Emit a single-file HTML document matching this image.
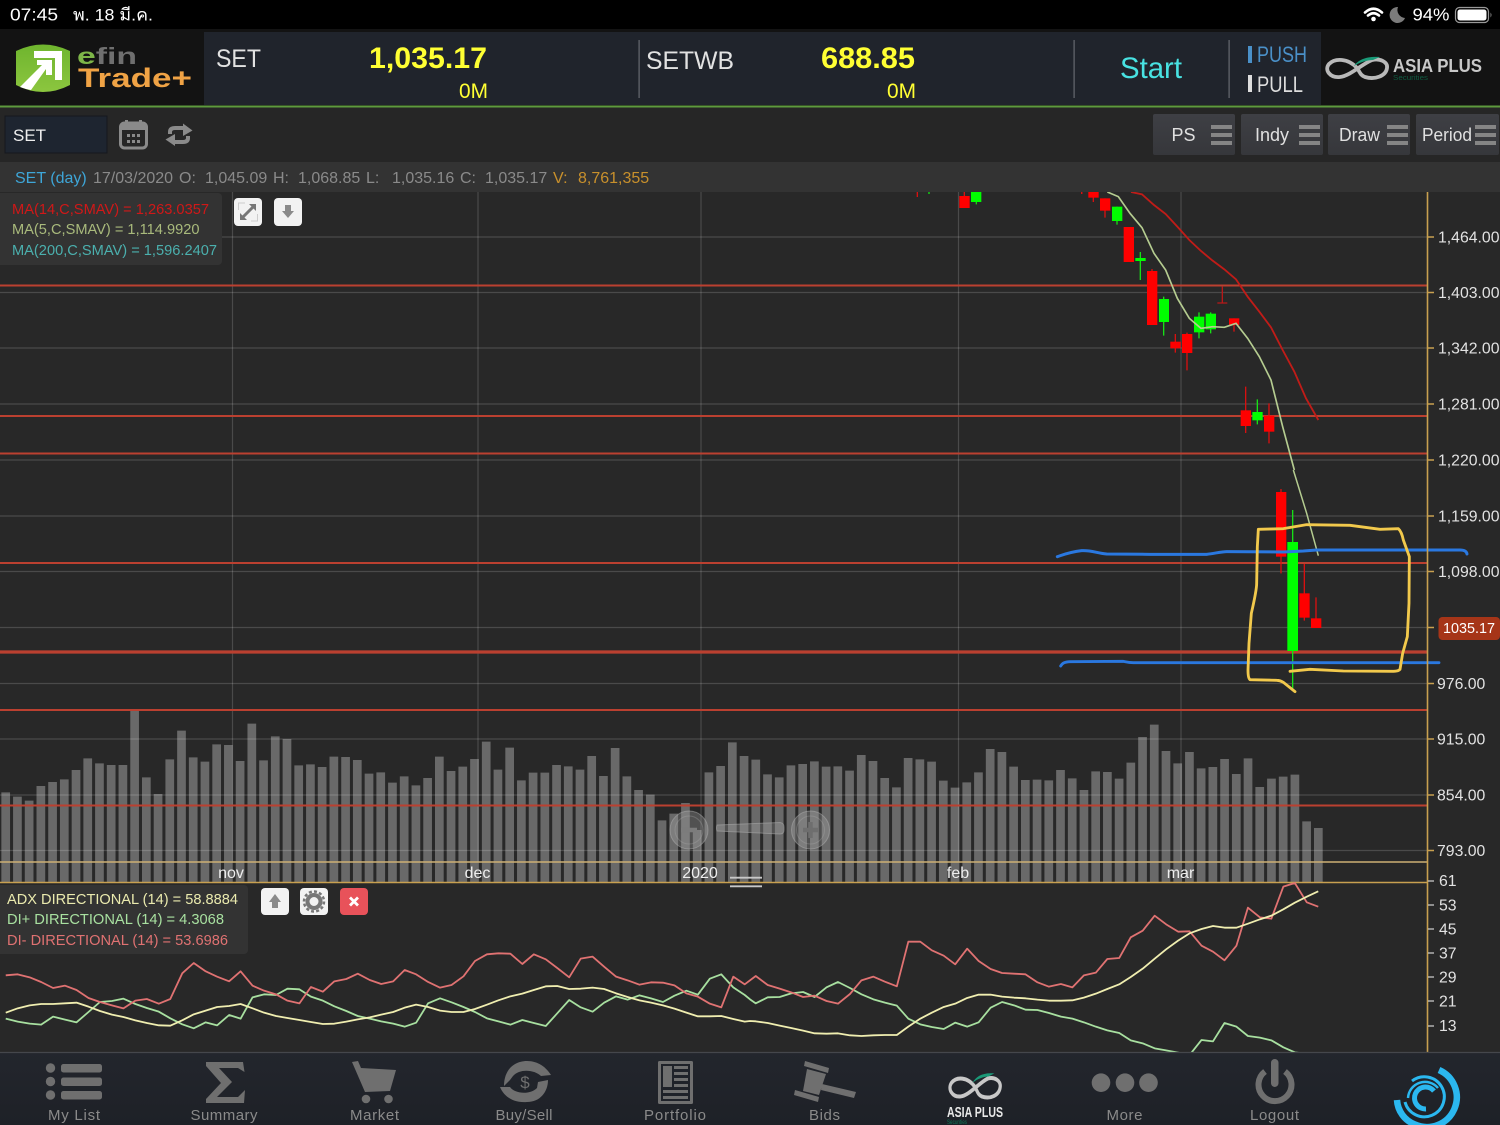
<!DOCTYPE html>
<html lang="th"><head><meta charset="utf-8"><title>efin Trade+</title>
<style>html,body{margin:0;padding:0;background:#282828;width:1500px;height:1125px;overflow:hidden}svg{display:block;filter:blur(.35px)}text{font-family:"Liberation Sans","Noto Sans CJK JP",sans-serif}</style></head>
<body>
<svg width="1500" height="1125" viewBox="0 0 1500 1125" xmlns="http://www.w3.org/2000/svg">
<defs>
<clipPath id="c1"><rect x="0" y="192" width="1427" height="690"/></clipPath>
<clipPath id="c2"><rect x="0" y="882" width="1427" height="170"/></clipPath>
<clipPath id="c3"><rect x="1380" y="1053" width="120" height="72"/></clipPath>
<linearGradient id="sh" x1="0" y1="0" x2="0" y2="1"><stop offset="0" stop-color="#6fb52e"/><stop offset="1" stop-color="#8cc63f"/></linearGradient>
<linearGradient id="btn" x1="0" y1="0" x2="0" y2="1"><stop offset="0" stop-color="#3e3f44"/><stop offset="1" stop-color="#36373b"/></linearGradient>
<linearGradient id="nav" x1="0" y1="0" x2="0" y2="1"><stop offset="0" stop-color="#23262d"/><stop offset="1" stop-color="#1e2127"/></linearGradient>
</defs>
<rect width="1500" height="1125" fill="#282828"/>
<!-- status bar -->
<rect width="1500" height="29" fill="#000"/>
<text x="10" y="20.5" font-size="17.5" fill="#fff" textLength="48" lengthAdjust="spacingAndGlyphs">07:45</text>
<text x="73" y="20.5" font-size="17" fill="#fff" textLength="80" lengthAdjust="spacingAndGlyphs">พ. 18 มี.ค.</text>
<g fill="none" stroke="#fff" stroke-width="2.6" stroke-linecap="round"><path d="M1365 12.5Q1373.500 5 1382 12.500"/><path d="M1368 15.500Q1373.500 11 1379 15.500"/></g>
<circle cx="1373.500" cy="19" r="2.300" fill="#fff"/>
<path d="M1398 7A8 8 0 1 0 1405 18A8 8 0 0 1 1398 7Z" fill="#7b7b7b"/>
<text x="1412.500" y="20.500" font-size="17.500" fill="#fff" textLength="37" lengthAdjust="spacingAndGlyphs">94%</text>
<rect x="1455.500" y="7.500" width="33" height="15" rx="4" fill="none" stroke="#999" stroke-width="1.200"/>
<rect x="1457.500" y="9.500" width="29" height="11" rx="2.500" fill="#fff"/>
<path d="M1490.500 12.500Q1492.500 15 1490.500 17.500Z" fill="#888"/>
<!-- header -->
<rect y="29" width="1500" height="77" fill="#131313"/>
<rect x="204" y="32" width="1117" height="73" fill="#20242c"/>
<rect y="105.500" width="1500" height="2" fill="#5d9a3d"/>
<path d="M16 51Q43 38 70 51V85Q43 99 16 85Z" fill="url(#sh)"/>
<path d="M34 51H62V80H55V58H34Z" fill="#fff"/>
<path d="M37 60H52V75H46V69L31 90Q25 89 20 87L42 65H37Z" fill="#fff"/>
<text x="77" y="64" font-size="23" font-weight="bold" textLength="60" lengthAdjust="spacingAndGlyphs"><tspan fill="#7db548">e</tspan><tspan fill="#6f6f6f">fin</tspan></text>
<text x="78" y="87" font-size="27" font-weight="bold" fill="#f0a345" textLength="114" lengthAdjust="spacingAndGlyphs">Trade+</text>
<text x="216" y="67" font-size="25" fill="#e2e2e2" textLength="45" lengthAdjust="spacingAndGlyphs">SET</text>
<text x="369" y="68" font-size="30" font-weight="bold" fill="#ffff33" textLength="118" lengthAdjust="spacingAndGlyphs">1,035.17</text>
<text x="459" y="98" font-size="21" fill="#ffff33" textLength="29" lengthAdjust="spacingAndGlyphs">0M</text>
<text x="646" y="69" font-size="25" fill="#e2e2e2" textLength="88" lengthAdjust="spacingAndGlyphs">SETWB</text>
<text x="821" y="68" font-size="30" font-weight="bold" fill="#ffff33" textLength="94" lengthAdjust="spacingAndGlyphs">688.85</text>
<text x="887" y="98" font-size="21" fill="#ffff33" textLength="29" lengthAdjust="spacingAndGlyphs">0M</text>
<g fill="#666a70"><rect x="638.500" y="40" width="1.200" height="58"/><rect x="1073.500" y="40" width="1.200" height="58"/><rect x="1228.500" y="40" width="1.200" height="58"/></g>
<text x="1120" y="78" font-size="29.500" fill="#48e2e2" textLength="62" lengthAdjust="spacingAndGlyphs">Start</text>
<rect x="1248" y="46" width="4" height="17" fill="#4a90c8"/>
<text x="1257" y="62" font-size="22" fill="#4a90c8" textLength="50" lengthAdjust="spacingAndGlyphs">PUSH</text>
<rect x="1248" y="75" width="4" height="17" fill="#ddd"/>
<text x="1257" y="92" font-size="22" fill="#ddd" textLength="46" lengthAdjust="spacingAndGlyphs">PULL</text>
<path d="M1357 68C1348 58 1335 58 1329 64C1324 70 1330 78 1340 77C1350 76 1362 64 1372 60C1380 58 1388 62 1387 68C1386 76 1375 80 1365 77C1360 75 1360 72 1357 68" fill="none" stroke="#b9b9b9" stroke-width="3.800"/>
<path d="M1354 66C1358 60 1366 56 1380 57L1373 60C1368 60 1360 62 1354 66Z" fill="#1a9a78"/>
<text x="1393" y="72" font-size="18" font-weight="bold" fill="#c9c9c9" textLength="89" lengthAdjust="spacingAndGlyphs">ASIA PLUS</text>
<text x="1393" y="80" font-size="7" fill="#0f5a40" textLength="35" lengthAdjust="spacingAndGlyphs">Securities</text>
<!-- toolbar -->
<rect y="107.500" width="1500" height="55" fill="#262626"/>
<rect x="5" y="116" width="102" height="37" fill="#1e2530" stroke="#15181d"/>
<text x="13" y="141" font-size="17" fill="#eee">SET</text>
<rect x="120.500" y="123" width="26" height="25" rx="4" fill="none" stroke="#8a8a8a" stroke-width="3"/>
<rect x="120.500" y="123" width="26" height="7" fill="#8a8a8a"/>
<rect x="125" y="120" width="3" height="6" fill="#8a8a8a"/><rect x="139" y="120" width="3" height="6" fill="#8a8a8a"/>
<g fill="#8a8a8a"><rect x="127" y="134" width="3" height="3"/><rect x="132" y="134" width="3" height="3"/><rect x="137" y="134" width="3" height="3"/><rect x="127" y="140" width="3" height="3"/><rect x="132" y="140" width="3" height="3"/><rect x="137" y="140" width="3" height="3"/></g>
<g fill="none" stroke="#8a8a8a" stroke-width="4"><path d="M170 134V132Q170 128 175 128H185"/><path d="M188 136V138Q188 142 183 142H173"/></g>
<path d="M183 123.500L192.500 130.500L183 136Z" fill="#8a8a8a"/><path d="M175 134L165.500 139.500L175 146Z" fill="#8a8a8a"/>
<g fill="url(#btn)"><rect x="1153" y="114" width="82" height="41" rx="2"/><rect x="1241" y="114" width="82" height="41" rx="2"/><rect x="1328" y="114" width="82" height="41" rx="2"/><rect x="1416" y="114" width="83" height="41" rx="2"/></g>
<g fill="#858585"><path d="M1211 125h21v4h-21zM1211 133h21v4h-21zM1211 141h21v4h-21z"/><path d="M1299 125h21v4h-21zM1299 133h21v4h-21zM1299 141h21v4h-21z"/><path d="M1387 125h21v4h-21zM1387 133h21v4h-21zM1387 141h21v4h-21z"/><path d="M1475 125h21v4h-21zM1475 133h21v4h-21zM1475 141h21v4h-21z"/></g>
<g font-size="18" fill="#e0e0e0"><text x="1171.500" y="141">PS</text><text x="1255" y="141">Indy</text><text x="1339" y="141" textLength="41" lengthAdjust="spacingAndGlyphs">Draw</text><text x="1422" y="141" textLength="50" lengthAdjust="spacingAndGlyphs">Period</text></g>
<!-- info bar -->
<rect y="162" width="1500" height="30" fill="#333"/>
<text x="15" y="183" font-size="16" fill="#3ea6d8">SET (day)</text>
<g font-size="16" fill="#8a8a8a"><text x="93" y="183">17/03/2020</text><text x="179" y="183">O:</text><text x="205" y="183">1,045.09</text><text x="273" y="183">H:</text><text x="298" y="183">1,068.85</text><text x="366" y="183">L:</text><text x="392" y="183">1,035.16</text><text x="460" y="183">C:</text><text x="485" y="183">1,035.17</text></g>
<text x="553" y="183" font-size="16" fill="#c8902c">V:</text><text x="578" y="183" font-size="16" fill="#c8902c">8,761,355</text>
<!-- volume bars -->
<g transform="translate(5.700,700) scale(11.72,0.33333)"><path vector-effect="non-scaling-stroke" fill="none" stroke="#696969" stroke-width="8.700" d="M0 546V277M1 546V290M2 546V302M3 546V258M4 546V246M5 546V238M6 546V210M7 546V175M8 546V190M9 546V195M10 546V195M11 546V30M12 546V232M13 546V282M14 546V178M15 546V92M16 546V172M17 546V185M18 546V133M19 546V135M20 546V183M21 546V71M22 546V181M23 546V109M24 546V117M25 546V196M26 546V193M27 546V201M28 546V170M29 546V171M30 546V180M31 546V221M32 546V217M33 546V248M34 546V229M35 546V256M36 546V234M37 546V170M38 546V213M39 546V200M40 546V177M41 546V125M42 546V209M43 546V143M44 546V241M45 546V218M46 546V218M47 546V195M48 546V199M49 546V209M50 546V168M51 546V228M52 546V144M53 546V229M54 546V270M55 546V284M56 546V361M57 546V341M58 546V309M59 546V390M60 546V217M61 546V198M62 546V127M63 546V168M64 546V179M65 546V223M66 546V232M67 546V196M68 546V192M69 546V184M70 546V200M71 546V199M72 546V212M73 546V165M74 546V183M75 546V234M76 546V262M77 546V174M78 546V178M79 546V185M80 546V242M81 546V263M82 546V247M83 546V217M84 546V147M85 546V156M86 546V200M87 546V240M88 546V239M89 546V241M90 546V210M91 546V235M92 546V270M93 546V214M94 546V216M95 546V236M96 546V188M97 546V111M98 546V74M99 546V153M100 546V190M101 546V156M102 546V205M103 546V201M104 546V177M105 546V222M106 546V175M107 546V261M108 546V236M109 546V230M110 546V224M111 546V364M112 546V384"/></g>
<!-- grid -->
<g stroke="#fff" stroke-opacity=".16" stroke-width="1.200" fill="none"><path d="M0 237H1427M0 292.500H1427M0 348H1427M0 404H1427M0 460H1427M0 516H1427M0 571.500H1427M0 627.500H1427M0 683.500H1427M0 739H1427M0 795H1427M0 850.500H1427"/><path d="M232.500 192V862M478 192V862M701 192V862M958.500 192V862M1181 192V862"/></g>
<!-- horizontal red levels -->
<g stroke="#bb4030" fill="none"><path stroke-width="2" d="M0 285.500H1427M0 416H1427M0 453.500H1427M0 563H1427M0 710H1427M0 805.500H1427"/><path stroke-width="3.200" d="M0 652H1427"/></g>
<path d="M0 862H1427" stroke="#cdb074" stroke-width="1.600"/>
<path d="M0 882.500H1427" stroke="#c8a050" stroke-width="1.400"/>
<!-- candles -->
<g clip-path="url(#c1)"><g transform="translate(900,186) scale(.33333)">
<path d="M52 18V33M193 18V30M545 18V24" stroke="#d81010" stroke-width="4"/><path d="M87 18V24M229 40V55" stroke="#10e010" stroke-width="4"/>
<rect x="178" y="30" width="31" height="36" fill="#f00"/><rect x="213" y="10" width="31" height="38" fill="#0f0"/>
</g>
<g transform="translate(1050,190) scale(.33333)">
<g stroke="#d81010" stroke-width="4" fill="none"><path d="M95 0V12M130 0V36M165 25V83M306 237V405M376 432V488M411 428V541M552 385V425M587 590V729M657 640V760"/><path d="M517 290V338M502 339H532" stroke="#b81818"/></g>
<g stroke="#16e016" stroke-width="4" fill="none"><path d="M201 50V104M271 186V270M341 320V437M447 367V445M482 367V430M622 628V703"/></g>
<g fill="#f00"><rect x="115" y="0" width="31" height="23"/><rect x="150" y="25" width="31" height="37"/><rect x="221" y="111" width="31" height="105"/><rect x="291" y="243" width="31" height="162"/><rect x="361" y="455" width="31" height="20"/><rect x="396" y="432" width="31" height="57"/><rect x="537" y="385" width="31" height="20"/><rect x="572" y="661" width="31" height="47"/><rect x="642" y="677" width="31" height="48"/></g>
<g fill="#0f0"><rect x="186" y="50" width="31" height="43"/><rect x="256" y="204" width="31" height="9"/><rect x="327" y="327" width="30" height="69"/><rect x="432" y="380" width="31" height="47"/><rect x="467" y="371" width="31" height="47"/><rect x="607" y="666" width="31" height="25"/></g>
<polyline fill="none" stroke="#c01c18" stroke-width="5.500" points="243,6 276,13 312,45 347,72 382,110 418,150 453,183 488,212 523,238 558,268 593,320 628,365 663,412 698,480 733,545 768,625 805,690"/>
<polyline fill="none" stroke="#b5cc90" stroke-width="5" points="172,6 205,20 240,70 276,113 312,190 347,240 382,325 418,385 453,415 488,410 523,412 558,400 593,445 628,500 663,570 698,710 733,840"/>
</g>
<g transform="translate(1050,470) scale(.33333)">
<path d="M693 57V310M763 282V452M798 382V474" stroke="#d81010" stroke-width="4" fill="none"/>
<path d="M728 120V660" stroke="#16e016" stroke-width="4" fill="none"/>
<rect x="678" y="66" width="31" height="194" fill="#f00"/><rect x="712" y="216" width="32" height="327" fill="#0f0"/>
<rect x="748" y="370" width="31" height="73" fill="#f00"/><rect x="783" y="445" width="31" height="29" fill="#f00"/>
<polyline fill="none" stroke="#b5cc90" stroke-width="4.500" points="730,0 770,130 805,257"/>
</g></g>
<!-- hand-drawn -->
<g transform="translate(1050,470) scale(.33333)" fill="none" stroke-linecap="round" stroke-linejoin="round">
<path stroke="#2a78e0" stroke-width="9" d="M22 260C40 254 60 246 95 242C125 240 140 250 170 252L300 253L470 253C495 250 515 245 530 245L700 246L760 243L800 240L1230 240C1245 240 1250 245 1251 252"/>
<path stroke="#2a78e0" stroke-width="8.500" d="M32 588C38 578 45 576 60 575L220 574C230 576 235 578 250 578L1167 578"/>
<path stroke="#f2c94c" stroke-width="8.500" d="M735 665L700 637Q690 631 680 631L600 629Q594 625 594 600L597 520L604 430Q620 360 620 340L622 230L625 178L700 176L770 164L900 166L990 178L1045 176Q1055 185 1060 210L1078 260L1077 400L1072 500L1058 550L1050 598Q1045 604 1030 604L880 603L780 598L720 604"/>
</g>
<!-- axis -->
<path d="M1427.500 192V1052" stroke="#c8a050" stroke-width="1.600"/>
<g stroke="#c8a050" stroke-width="1.600"><path d="M1427 237H1434M1427 292.500H1434M1427 348H1434M1427 404H1434M1427 460H1434M1427 516H1434M1427 571.500H1434M1427 627.500H1434M1427 683.500H1434M1427 739H1434M1427 795H1434M1427 850.500H1434"/></g>
<path d="M1428 881H1434M1428 905H1434M1428 929H1434M1428 953H1434M1428 977H1434M1428 1001H1434M1428 1026H1434" stroke="#ccc" stroke-width="1.200"/>
<g font-size="15.800" fill="#e2e2e2"><text x="1438" y="242.500">1,464.00</text><text x="1438" y="298">1,403.00</text><text x="1438" y="353.500">1,342.00</text><text x="1438" y="409.500">1,281.00</text><text x="1438" y="465.500">1,220.00</text><text x="1438" y="521.500">1,159.00</text><text x="1438" y="577">1,098.00</text><text x="1437" y="689">976.00</text><text x="1437" y="744.500">915.00</text><text x="1437" y="800.500">854.00</text><text x="1437" y="856">793.00</text>
<text x="1439" y="886">61</text><text x="1439" y="910.500">53</text><text x="1439" y="934.500">45</text><text x="1439" y="958.500">37</text><text x="1439" y="982.500">29</text><text x="1439" y="1006.500">21</text><text x="1439" y="1031">13</text></g>
<rect x="1438.500" y="617" width="61.500" height="23" rx="4" fill="#a63518"/>
<text x="1443" y="633" font-size="14.500" fill="#fff" textLength="52" lengthAdjust="spacingAndGlyphs">1035.17</text>
<!-- month labels -->
<g font-size="16" fill="#eee" text-anchor="middle"><text x="231" y="878">nov</text><text x="477.500" y="878">dec</text><text x="700" y="878">2020</text><text x="958" y="878">feb</text><text x="1180.500" y="878">mar</text></g>
<!-- zoom controls -->
<g fill="#a8a8a8" fill-opacity=".32" stroke="#b0b0b0" stroke-opacity=".5"><circle cx="689" cy="830" r="19"/><circle cx="810.500" cy="830" r="19"/><path d="M717 825L780 822.500Q784 823 784 827V830Q784 834 780 834L717 831Q716 828 717 825Z"/></g>
<circle cx="689" cy="830" r="14" fill="none" stroke="#b0b0b0" stroke-opacity=".3"/><circle cx="810.500" cy="830" r="14" fill="none" stroke="#b0b0b0" stroke-opacity=".3"/>
<path d="M681 830H697" stroke="#7c7c7c" stroke-width="4.500"/><path d="M803 830H818M810.500 822V838" stroke="#6e6e6e" stroke-width="4.500"/>
<path d="M730 877.700H762M730 886.300H762" stroke="#c8c8c8" stroke-width="1.800"/>
<!-- legend main -->
<rect x="-6" y="193" width="228" height="72" rx="4" fill="#333"/>
<g font-size="14.500"><text x="12" y="214" fill="#d01818" textLength="197" lengthAdjust="spacingAndGlyphs">MA(14,C,SMAV) = 1,263.0357</text><text x="12" y="234" fill="#a9ba7c" textLength="187.500" lengthAdjust="spacingAndGlyphs">MA(5,C,SMAV) = 1,114.9920</text><text x="12" y="255" fill="#4bb0ae" textLength="205" lengthAdjust="spacingAndGlyphs">MA(200,C,SMAV) = 1,596.2407</text></g>
<rect x="234" y="198" width="28" height="28" rx="4" fill="#f2f2f2"/><rect x="274" y="198" width="28" height="28" rx="4" fill="#f2f2f2"/>
<path d="M241 219L255 205" stroke="#777" stroke-width="3"/><path d="M240 213V220H247ZM256 211V204H249Z" fill="#777"/><path d="M238.500 210V203H245M257.500 214V221H251" fill="none" stroke="#ccc"/>
<path d="M285 205H291V211H294L288 218L282 211H285Z" fill="#8a8a8a"/>
<!-- ADX panel -->
<g clip-path="url(#c2)"><g transform="translate(0,880) scale(.47832,.33333)" fill="none" stroke-width="1.800" stroke-linejoin="round">
<polyline vector-effect="non-scaling-stroke" stroke="#a8e0a0" points="12,416 37,425 62,431 86,434 111,410 136,419 160,427 185,396 209,366 234,363 258,356 283,372 307,384 332,395 356,415 381,433 405,445 430,427 454,436 479,405 503,416 528,352 552,343 577,345 601,326 626,328 650,350 675,362 699,379 724,393 748,408 773,416 797,424 822,431 846,440 870,428 895,370 920,355 944,367 969,381 993,396 1018,415 1042,424 1067,434 1092,420 1116,429 1141,438 1165,400 1190,360 1214,382 1239,395 1263,368 1288,349 1312,359 1337,346 1361,355 1386,366 1410,347 1435,332 1459,344 1484,296 1508,283 1533,322 1557,345 1568,358 1580,370 1605,352 1630,351 1654,340 1679,336 1703,351 1728,322 1752,306 1777,324 1801,343 1826,358 1850,368 1875,377 1899,416 1924,433 1948,441 1973,447 1997,428 2022,440 2046,427 2071,383 2095,366 2120,376 2144,389 2169,390 2193,399 2218,410 2242,416 2266,427 2291,440 2315,451 2340,459 2364,481 2389,490 2414,505 2438,511 2463,518 2487,525 2512,480 2536,484 2560,429 2585,440 2609,468 2634,473 2658,481 2683,502 2707,517 2732,522"/>
<polyline vector-effect="non-scaling-stroke" stroke="#e07272" points="12,286 37,283 62,292 86,306 111,324 136,317 160,330 185,354 209,366 234,376 258,385 283,362 307,357 332,371 356,357 381,280 405,249 430,274 454,290 479,304 503,274 528,317 552,332 577,343 601,362 626,370 650,321 675,335 699,304 724,297 748,281 773,300 797,312 822,304 846,270 870,283 895,306 920,323 944,315 969,289 993,243 1018,223 1042,220 1067,221 1092,252 1116,223 1141,238 1165,264 1190,292 1214,236 1239,230 1263,260 1288,290 1312,301 1337,314 1361,307 1386,308 1410,316 1435,340 1459,350 1484,371 1508,382 1533,290 1557,313 1580,288 1605,315 1630,326 1654,337 1679,351 1703,347 1728,363 1752,371 1777,342 1801,301 1826,290 1850,305 1875,319 1899,185 1924,185 1948,211 1973,227 1997,253 2022,206 2046,243 2071,267 2095,279 2120,281 2144,283 2169,307 2193,320 2218,312 2242,322 2266,286 2291,278 2315,237 2340,234 2364,172 2389,152 2414,107 2438,133 2463,155 2487,154 2512,197 2536,215 2560,241 2585,197 2609,83 2634,112 2658,116 2683,20 2707,9 2732,67 2756,80"/>
<polyline vector-effect="non-scaling-stroke" stroke="#f0eeb0" points="12,398 37,385 62,376 86,372 111,372 136,370 160,368 185,380 209,393 234,404 258,411 283,421 307,429 332,436 356,437 381,421 405,403 430,392 454,381 479,378 503,372 528,385 552,398 577,408 601,414 626,420 650,426 675,432 699,431 724,425 748,418 773,412 797,404 822,396 846,383 870,374 895,381 920,392 944,396 969,396 993,387 1018,374 1042,361 1067,349 1092,341 1116,330 1141,319 1165,318 1190,327 1214,326 1239,323 1263,327 1288,340 1312,351 1337,361 1361,368 1386,376 1410,386 1435,398 1459,409 1484,409 1508,408 1533,417 1557,425 1568,423 1580,424 1605,429 1630,437 1654,444 1679,452 1703,460 1728,461 1752,460 1777,466 1801,468 1826,466 1850,465 1875,465 1899,440 1924,416 1948,398 1973,381 1997,371 2022,354 2046,344 2071,344 2095,350 2120,353 2144,355 2169,359 2193,362 2218,362 2242,361 2266,353 2291,341 2315,327 2340,313 2364,291 2389,266 2414,236 2438,208 2463,182 2487,160 2512,147 2536,138 2560,143 2585,143 2609,131 2634,118 2658,107 2683,88 2707,68 2732,50 2756,34"/>
</g></g>
<rect x="-6" y="885" width="254" height="69" rx="4" fill="#333"/>
<g font-size="14.500"><text x="7" y="904" fill="#eaeaae" textLength="231" lengthAdjust="spacingAndGlyphs">ADX DIRECTIONAL (14) = 58.8884</text><text x="7" y="924" fill="#a8e0a0" textLength="217" lengthAdjust="spacingAndGlyphs">DI+ DIRECTIONAL (14) = 4.3068</text><text x="7" y="945" fill="#e07272" textLength="221" lengthAdjust="spacingAndGlyphs">DI- DIRECTIONAL (14) = 53.6986</text></g>
<rect x="261" y="888" width="28" height="27" rx="4" fill="#f2f2f2"/><rect x="300" y="888" width="28" height="27" rx="4" fill="#f2f2f2"/><rect x="340" y="888" width="28" height="27" rx="4" fill="#e8525a"/>
<path d="M275 894L281 902H278V908H272V902H269Z" fill="#8a8a8a"/>
<circle cx="314" cy="901.500" r="6.500" fill="none" stroke="#777" stroke-width="4"/><circle cx="314" cy="901.500" r="10" fill="none" stroke="#777" stroke-width="2.500" stroke-dasharray="3 2.200"/>
<path d="M350 897.500L358 905.500M358 897.500L350 905.500" stroke="#fff" stroke-width="2.800"/>
<!-- bottom nav -->
<rect y="1052" width="1500" height="73" fill="url(#nav)"/>
<path d="M0 1052.500H1500" stroke="#45474c" stroke-width="1.200"/>
<g fill="#6f6f6f">
<circle cx="50.500" cy="1068" r="4.700"/><circle cx="50.500" cy="1081.500" r="4.700"/><circle cx="50.500" cy="1095" r="4.700"/>
<rect x="61" y="1064" width="41" height="8.500" rx="2.500"/><rect x="61" y="1077.500" width="41" height="8.500" rx="2.500"/><rect x="61" y="1091" width="41" height="8.500" rx="2.500"/>
<path d="M206 1062H243L244.500 1072L238 1068H219L232 1082L217 1097H238L245 1090L244 1103H206V1099L221 1083L206 1066Z"/>
<path d="M352 1062L358 1061L361 1068L396 1070L390 1091L365 1092Z"/><circle cx="366" cy="1099" r="4.300"/><circle cx="388.500" cy="1099" r="4.300"/>
<path d="M504 1086C504 1070 514 1061 527 1061C538 1061 546 1067 551 1075L541 1076C535 1070 520 1068 513 1076L510 1080Z"/>
<path d="M500 1087L510 1087C515 1094 530 1095 537 1088L538 1082L548 1080C548 1092 540 1102 527 1102C514 1103 504 1097 500 1087Z"/>
<rect x="658" y="1061" width="35" height="43" rx="1.500"/>
<path d="M805 1061L829 1068L828 1073L804 1066ZM795 1090L819 1097L818 1102L794 1095ZM807 1069L826 1074L819 1095L803 1091ZM822 1084L856 1092L854 1098L821 1090Z"/>
<circle cx="1101" cy="1082.700" r="9.300"/><circle cx="1125" cy="1082.700" r="9.300"/><circle cx="1148.500" cy="1082.700" r="9.300"/>
<rect x="1271" y="1059" width="7.500" height="28" rx="3.700"/>
</g>
<text x="525" y="1088" font-size="17" fill="#6f6f6f" text-anchor="middle">$</text>
<rect x="661" y="1064" width="29" height="37" fill="#1f2229"/>
<path d="M663 1066h9v21h-9zM674 1066h14v3h-14zM674 1072h14v3h-14zM674 1078h14v3h-14zM674 1084h14v3h-14zM663 1090h25v3h-25zM663 1096h25v3h-25z" fill="#6f6f6f"/>
<path d="M1265 1071.500A16.500 16.500 0 1 0 1285 1071.500" fill="none" stroke="#6f6f6f" stroke-width="6"/>
<g transform="translate(975,1087) scale(.84,1.050) translate(-1357,-68)"><path d="M1357 68C1348 58 1335 58 1329 64C1324 70 1330 78 1340 77C1350 76 1362 64 1372 60C1380 58 1388 62 1387 68C1386 76 1375 80 1365 77C1360 75 1360 72 1357 68" fill="none" stroke="#c8c8c8" stroke-width="3.800"/><path d="M1354 64C1358 58 1366 54 1380 55L1373 58C1368 58 1360 60 1354 64Z" fill="#1a9a78"/></g>
<text x="947" y="1117" font-size="15" font-weight="bold" fill="#e8e8e8" textLength="56" lengthAdjust="spacingAndGlyphs">ASIA PLUS</text>
<text x="947" y="1124" font-size="6" fill="#0f7a58" textLength="20" lengthAdjust="spacingAndGlyphs">Securities</text>
<g font-size="15" fill="#8a8a8a"><text x="48" y="1120" textLength="52" lengthAdjust="spacing">My List</text><text x="190.500" y="1120" textLength="67" lengthAdjust="spacing">Summary</text><text x="350" y="1120" textLength="49" lengthAdjust="spacing">Market</text><text x="495.500" y="1120" textLength="57" lengthAdjust="spacing">Buy/Sell</text><text x="644" y="1120" textLength="62" lengthAdjust="spacing">Portfolio</text><text x="809" y="1120" textLength="31" lengthAdjust="spacing">Bids</text><text x="1106.500" y="1120" textLength="36" lengthAdjust="spacing">More</text><text x="1250" y="1120" textLength="49" lengthAdjust="spacing">Logout</text></g>
<g clip-path="url(#c3)" fill="none" stroke="#2bb8f0"><path stroke-width="6.500" d="M1439 1070A28 28 0 0 1 1415 1124.500A28 28 0 0 1 1397 1100"/><path stroke-width="3" d="M1412 1081A20 20 0 1 1 1405 1102"/><path stroke-width="5" d="M1434 1091A11 11 0 1 0 1426 1109"/><path stroke-width="2.500" d="M1408 1098A17 17 0 0 1 1438 1088"/></g>
</svg>
</body></html>
